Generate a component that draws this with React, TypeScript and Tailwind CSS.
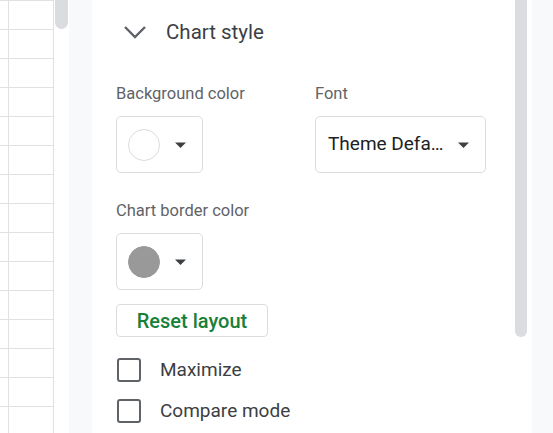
import React from "react";

const ROWS = 15;

function SheetColumn() {
  return (
    <div className="w-[54px] shrink-0 flex flex-col">
      <div className="flex h-[22px] border-b border-[#e1e1e1]">
        <div className="w-[9px] border-r border-[#e1e1e1]" />
        <div className="w-[45px] border-r border-[#e1e1e1]" />
      </div>
      {Array.from({ length: ROWS }).map((_, i) => (
        <div key={i} className="flex h-[29px] shrink-0 border-b border-[#e1e1e1]">
          <div className="w-[9px] border-r border-[#e1e1e1]" />
          <div className="w-[45px] border-r border-[#e1e1e1]" />
        </div>
      ))}
    </div>
  );
}

function Caret() {
  return (
    <svg width="11" height="6" viewBox="0 0 11 6" className="shrink-0">
      <path d="M0 0.5h11L5.5 6z" fill="#3c4043" />
    </svg>
  );
}

function ColorButton({ color }: { color: string }) {
  return (
    <button
      type="button"
      className="w-[87px] h-[57px] rounded-[5px] border border-[#dadce0] bg-white flex items-center pl-[11px] gap-[15px]"
    >
      <span
        className="w-[32px] h-[32px] rounded-full border border-[#dadce0]"
        style={{ backgroundColor: color, borderColor: color === "#ffffff" ? "#dadce0" : color }}
      />
      <Caret />
    </button>
  );
}

function Checkbox({ label }: { label: string }) {
  return (
    <label className="flex items-center gap-[19px] h-[24px]">
      <span className="w-[24px] h-[24px] rounded-[3px] border-2 border-[#5f6368] bg-white" />
      <span className="text-[19px] leading-[24px] text-[#3c4043]">{label}</span>
    </label>
  );
}

export default function App() {
  return (
    <div className="w-[553px] h-[433px] overflow-hidden flex bg-white font-['Roboto','Liberation_Sans',sans-serif]">
      <SheetColumn />
      <div className="w-[15px] shrink-0 pl-[1px]">
        <div className="w-[13px] h-[29px] rounded-b-full bg-[#dadce0]" />
      </div>
      <div className="w-[23px] shrink-0 bg-[#f8f9fb]" />

      <div className="w-[423px] shrink-0 pl-[24px] pt-[18px]">
        <div className="flex items-center h-[28px]">
          <svg width="24" height="14" viewBox="0 0 24 14" className="ml-[7px]">
            <path d="M2 2l10 10L22 2" fill="none" stroke="#5f6368" strokeWidth="2.4" />
          </svg>
          <span className="ml-[19px] text-[20.5px] leading-[28px] text-[#3c4043]">Chart style</span>
        </div>

        <div className="flex mt-[38px]">
          <div className="w-[199px] flex flex-col">
            <span className="text-[16.5px] leading-[20px] text-[#5f6368]">Background color</span>
            <div className="mt-[12px]">
              <ColorButton color="#ffffff" />
            </div>
          </div>
          <div className="flex flex-col">
            <span className="text-[16.5px] leading-[20px] text-[#5f6368]">Font</span>
            <button
              type="button"
              className="mt-[12px] w-[171px] h-[57px] rounded-[5px] border border-[#dadce0] bg-white flex items-center justify-between pl-[12px] pr-[16px]"
            >
              <span className="text-[19px] text-[#202124]">Theme Defa…</span>
              <Caret />
            </button>
          </div>
        </div>

        <div className="mt-[28px] flex flex-col">
          <span className="text-[16.5px] leading-[20px] text-[#5f6368]">Chart border color</span>
          <div className="mt-[12px]">
            <ColorButton color="#999999" />
          </div>
        </div>

        <button
          type="button"
          className="mt-[14px] w-[152px] h-[33px] rounded-[4px] border border-[#dadce0] bg-white text-[20px] leading-[24px] font-medium text-[#188038] flex items-center justify-center"
        >
          Reset layout
        </button>

        <div className="mt-[21px] flex flex-col gap-[17px] pl-[1px]">
          <Checkbox label="Maximize" />
          <Checkbox label="Compare mode" />
        </div>
      </div>

      <div className="w-[12px] shrink-0">
        <div className="w-[12px] h-[337px] rounded-b-full bg-[#dadce0]" />
      </div>
      <div className="w-[5px] shrink-0" />
      <div className="flex-1 bg-[#f8f9fb]" />
    </div>
  );
}
